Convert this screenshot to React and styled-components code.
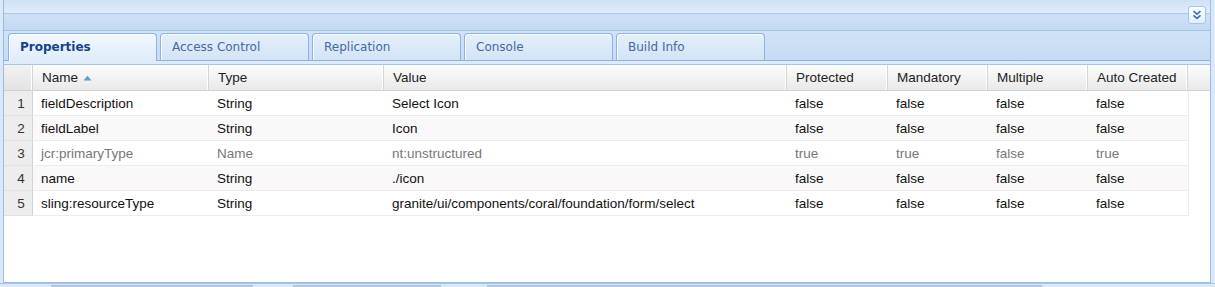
import React from "react";
import styled, { createGlobalStyle } from "styled-components";

const GlobalStyle = createGlobalStyle`
  html, body { margin: 0; padding: 0; }
  body {
    background: #dbe8f7;
    font-family: "Liberation Sans", Arial, sans-serif;
    overflow: hidden;
  }
`;

const Page = styled.div`
  width: 1215px;
  height: 287px;
  display: flex;
  flex-direction: column;
`;

const Panel = styled.div`
  margin: 0 4px 0 3px;
  height: 283px;
  box-sizing: border-box;
  border: 1px solid #99bbe8;
  border-top: none;
  display: flex;
  flex-direction: column;
  background: #fff;
`;

const PanelHeader = styled.div`
  border-bottom: 1px solid #a3c3e6;
  background: linear-gradient(
    to bottom,
    #cfe1f5 0px,
    #e0ecf9 13px,
    #a9c8ea 13px,
    #a9c8ea 14px,
    #cde1f6 14px,
    #c4daf3 30px
  );
  display: flex;
  align-items: flex-start;
  justify-content: flex-end;
  padding: 6px 4px 0 0;
  height: 24px;
`;

const ToolButton = styled.button`
  width: 18px;
  height: 18px;
  padding: 0;
  border: 1px solid #a6c4e6;
  border-radius: 3px;
  background: linear-gradient(to bottom, #fbfdff, #e2eefb);
  display: flex;
  align-items: center;
  justify-content: center;
  cursor: pointer;
`;

const TabBar = styled.div`
  height: 29px;
  border-bottom: 1px solid #8db2e3;
  background: linear-gradient(to bottom, #d0e3f7, #c6dcf4);
  display: flex;
  align-items: flex-end;
  gap: 3px;
  padding-left: 4px;
`;

const Tab = styled.div`
  width: 149px;
  box-sizing: border-box;
  border: 1px solid #8db2e3;
  border-bottom: none;
  border-radius: 4px 4px 0 0;
  padding: 6px 0 0 11px;
  font-family: "DejaVu Sans", Tahoma, sans-serif;
  font-size: 12px;
  font-weight: ${(p) => (p.$active ? "bold" : "normal")};
  color: ${(p) => (p.$active ? "#15428b" : "#416aa3")};
  background: ${(p) =>
    p.$active
      ? "linear-gradient(to bottom, #f3f8fe, #deebf9)"
      : "linear-gradient(to bottom, #e6f0fb, #d3e3f6)"};
  box-shadow: inset 1px 1px 0 rgba(255, 255, 255, 0.7);
  margin-bottom: ${(p) => (p.$active ? "-1px" : "0")};
  height: ${(p) => (p.$active ? "28px" : "27px")};
  white-space: nowrap;
`;

const TabGap = styled.div`
  height: 3px;
  background: #deebf9;
  border-bottom: 1px solid #a9c3e3;
`;

const Grid = styled.div`
  flex: 1;
  display: flex;
  flex-direction: column;
  background: #fff;
`;

const COLS = "29px 176px 175px 403px 101px 100px 100px 100px 1fr";

const HeaderRow = styled.div`
  display: grid;
  grid-template-columns: ${COLS};
  height: 25px;
  border-bottom: 1px solid #d0d0d0;
  background: linear-gradient(to bottom, #fcfcfc, #e9e9e9);
`;

const HeaderCell = styled.div`
  display: flex;
  align-items: center;
  gap: 5px;
  padding-left: 9px;
  font-size: 13.5px;
  color: #222;
  border-right: ${(p) => (p.$last ? "none" : "1px solid #d5d5d5")};
  box-shadow: ${(p) => (p.$last ? "none" : "inset -1px 0 0 #fff")};
  background: ${(p) => (p.$num ? "linear-gradient(to bottom, #f2f2f2, #e3e3e3)" : "transparent")};
  white-space: nowrap;
`;

const Row = styled.div`
  display: grid;
  grid-template-columns: ${COLS};
  height: 25px;
`;

const NumCell = styled.div`
  background: #ededed;
  border-right: 1px solid #d3d3d3;
  border-bottom: 1px solid #e2e2e2;
  display: flex;
  align-items: center;
  justify-content: center;
  padding-left: 6px;
  box-sizing: border-box;
  font-size: 13.5px;
  color: #333;
`;

const Cell = styled.div`
  display: flex;
  align-items: center;
  padding-left: 8px;
  font-size: 13.5px;
  color: ${(p) => (p.$dim ? "#777" : "#111")};
  background: ${(p) => (p.$alt ? "#faf8f8" : "#fff")};
  border-bottom: 1px solid #ececec;
  box-sizing: border-box;
  white-space: nowrap;
  overflow: hidden;
`;

const EndCell = styled.div`
  border-left: 1px solid #ececec;
`;

const BottomStrip = styled.div`
  height: 3px;
  background: #d9e8f8;
  border-top: 1px solid #a7c6e6;
  display: flex;
  align-items: flex-end;
`;

const StripBlock = styled.div`
  height: 2px;
  margin-left: ${(p) => p.$offset}px;
  width: ${(p) => p.$w}px;
  background: #b3c6df;
`;

const SortArrow = () => (
  <svg width="9" height="6" viewBox="0 0 9 6">
    <path d="M0.5 5.5 L4.5 0.8 L8.5 5.5 Z" fill="#5f9ad8" />
  </svg>
);

const Chevrons = () => (
  <svg width="10" height="10" viewBox="0 0 10 10">
    <path d="M1.5 1.2 L5 4.2 L8.5 1.2" fill="none" stroke="#3a6fb5" strokeWidth="1.6" />
    <path d="M1.5 5.4 L5 8.4 L8.5 5.4" fill="none" stroke="#3a6fb5" strokeWidth="1.6" />
  </svg>
);

const tabs = ["Properties", "Access Control", "Replication", "Console", "Build Info"];
const headers = ["Name", "Type", "Value", "Protected", "Mandatory", "Multiple", "Auto Created"];
const rows = [
  ["fieldDescription", "String", "Select Icon", "false", "false", "false", "false"],
  ["fieldLabel", "String", "Icon", "false", "false", "false", "false"],
  ["jcr:primaryType", "Name", "nt:unstructured", "true", "true", "false", "true"],
  ["name", "String", "./icon", "false", "false", "false", "false"],
  ["sling:resourceType", "String", "granite/ui/components/coral/foundation/form/select", "false", "false", "false", "false"],
];

export default function App() {
  return (
    <Page>
      <GlobalStyle />
      <Panel>
        <PanelHeader>
          <ToolButton aria-label="collapse">
            <Chevrons />
          </ToolButton>
        </PanelHeader>
        <TabBar>
          {tabs.map((t, i) => (
            <Tab key={t} $active={i === 0}>
              {t}
            </Tab>
          ))}
        </TabBar>
        <TabGap />
        <Grid>
          <HeaderRow>
            <HeaderCell $num />
            {headers.map((h, i) => (
              <HeaderCell key={h}>
                {h}
                {i === 0 && <SortArrow />}
              </HeaderCell>
            ))}
            <HeaderCell $last />
          </HeaderRow>
          {rows.map((r, ri) => (
            <Row key={ri}>
              <NumCell>{ri + 1}</NumCell>
              {r.map((v, ci) => (
                <Cell key={ci} $alt={ri % 2 === 1} $dim={ri === 2}>
                  {v}
                </Cell>
              ))}
              <EndCell />
            </Row>
          ))}
        </Grid>
      </Panel>
      <BottomStrip>
        <StripBlock $offset={51} $w={202} />
        <StripBlock $offset={40} $w={148} />
        <StripBlock $offset={46} $w={555} />
      </BottomStrip>
    </Page>
  );
}
